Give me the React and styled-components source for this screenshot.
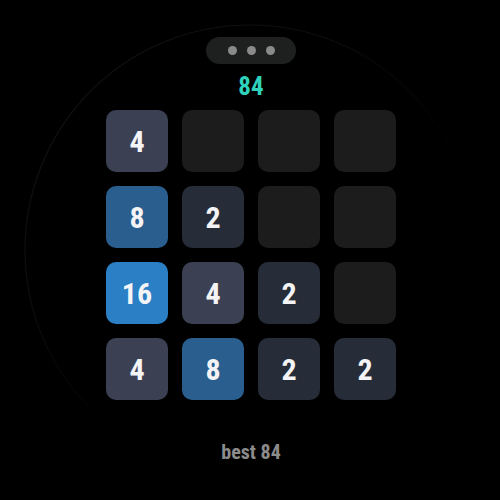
import React from "react";
import styled, { createGlobalStyle } from "styled-components";

const Global = createGlobalStyle`
  html, body { margin: 0; padding: 0; background: #000; }
  body { width: 500px; height: 500px; overflow: hidden; }
`;

const Screen = styled.div`
  position: relative;
  width: 500px;
  height: 500px;
  background: #000;
  display: flex;
  flex-direction: column;
  align-items: center;
  font-family: "Roboto Condensed", Roboto, "Liberation Sans", sans-serif;
  font-stretch: condensed;
`;

const Bezel = styled.svg`
  position: absolute;
  inset: 0;
  pointer-events: none;
`;

const Pill = styled.div`
  margin-top: 37px;
  width: 90px;
  height: 27px;
  border-radius: 14px;
  background: #1e1f1f;
  display: flex;
  align-items: center;
  justify-content: center;
  gap: 10px;
  margin-left: 2px;
`;

const Dot = styled.span`
  width: 9px;
  height: 9px;
  border-radius: 50%;
  background: #8a8a8a;
`;

const Score = styled.div`
  margin-top: 10px;
  height: 26px;
  line-height: 26px;
  font-size: 25px;
  font-weight: 700;
  color: #2fd3bb;
  margin-left: 2px;
`;

const Board = styled.div`
  margin-top: 10px;
  display: grid;
  grid-template-columns: repeat(4, 62px);
  grid-auto-rows: 62px;
  gap: 14px;
  margin-left: 2px;
`;

const tileColors = {
  0: "#1b1c1b",
  2: "#272d38",
  4: "#3b4153",
  8: "#2a5e8e",
  16: "#2b7fc4",
};

const Tile = styled.div`
  border-radius: 10px;
  background: ${(p) => tileColors[p.$v]};
  color: #f4f4f6;
  font-size: 30px;
  font-weight: 700;
  display: flex;
  align-items: center;
  justify-content: center;
`;

const Best = styled.div`
  margin-top: 40px;
  font-size: 20px;
  font-weight: 700;
  color: #8c8c8c;
  margin-left: 2px;
`;

const board = [
  [4, 0, 0, 0],
  [8, 2, 0, 0],
  [16, 4, 2, 0],
  [4, 8, 2, 2],
];

export default function App() {
  return (
    <Screen>
      <Global />
      <Bezel width="500" height="500" viewBox="0 0 500 500">
        <defs>
          <linearGradient id="rim" x1="0.1" y1="0" x2="0.75" y2="0.75">
            <stop offset="0" stopColor="#121212" />
            <stop offset="0.4" stopColor="#0d0d0d" />
            <stop offset="0.7" stopColor="#030303" />
            <stop offset="1" stopColor="#000" />
          </linearGradient>
        </defs>
        <circle cx="250" cy="250" r="225" fill="none" stroke="url(#rim)" strokeWidth="1.2" />
      </Bezel>
      <Pill>
        <Dot />
        <Dot />
        <Dot />
      </Pill>
      <Score>84</Score>
      <Board>
        {board.flat().map((v, i) => (
          <Tile key={i} $v={v}>
            {v ? v : ""}
          </Tile>
        ))}
      </Board>
      <Best>best 84</Best>
    </Screen>
  );
}
